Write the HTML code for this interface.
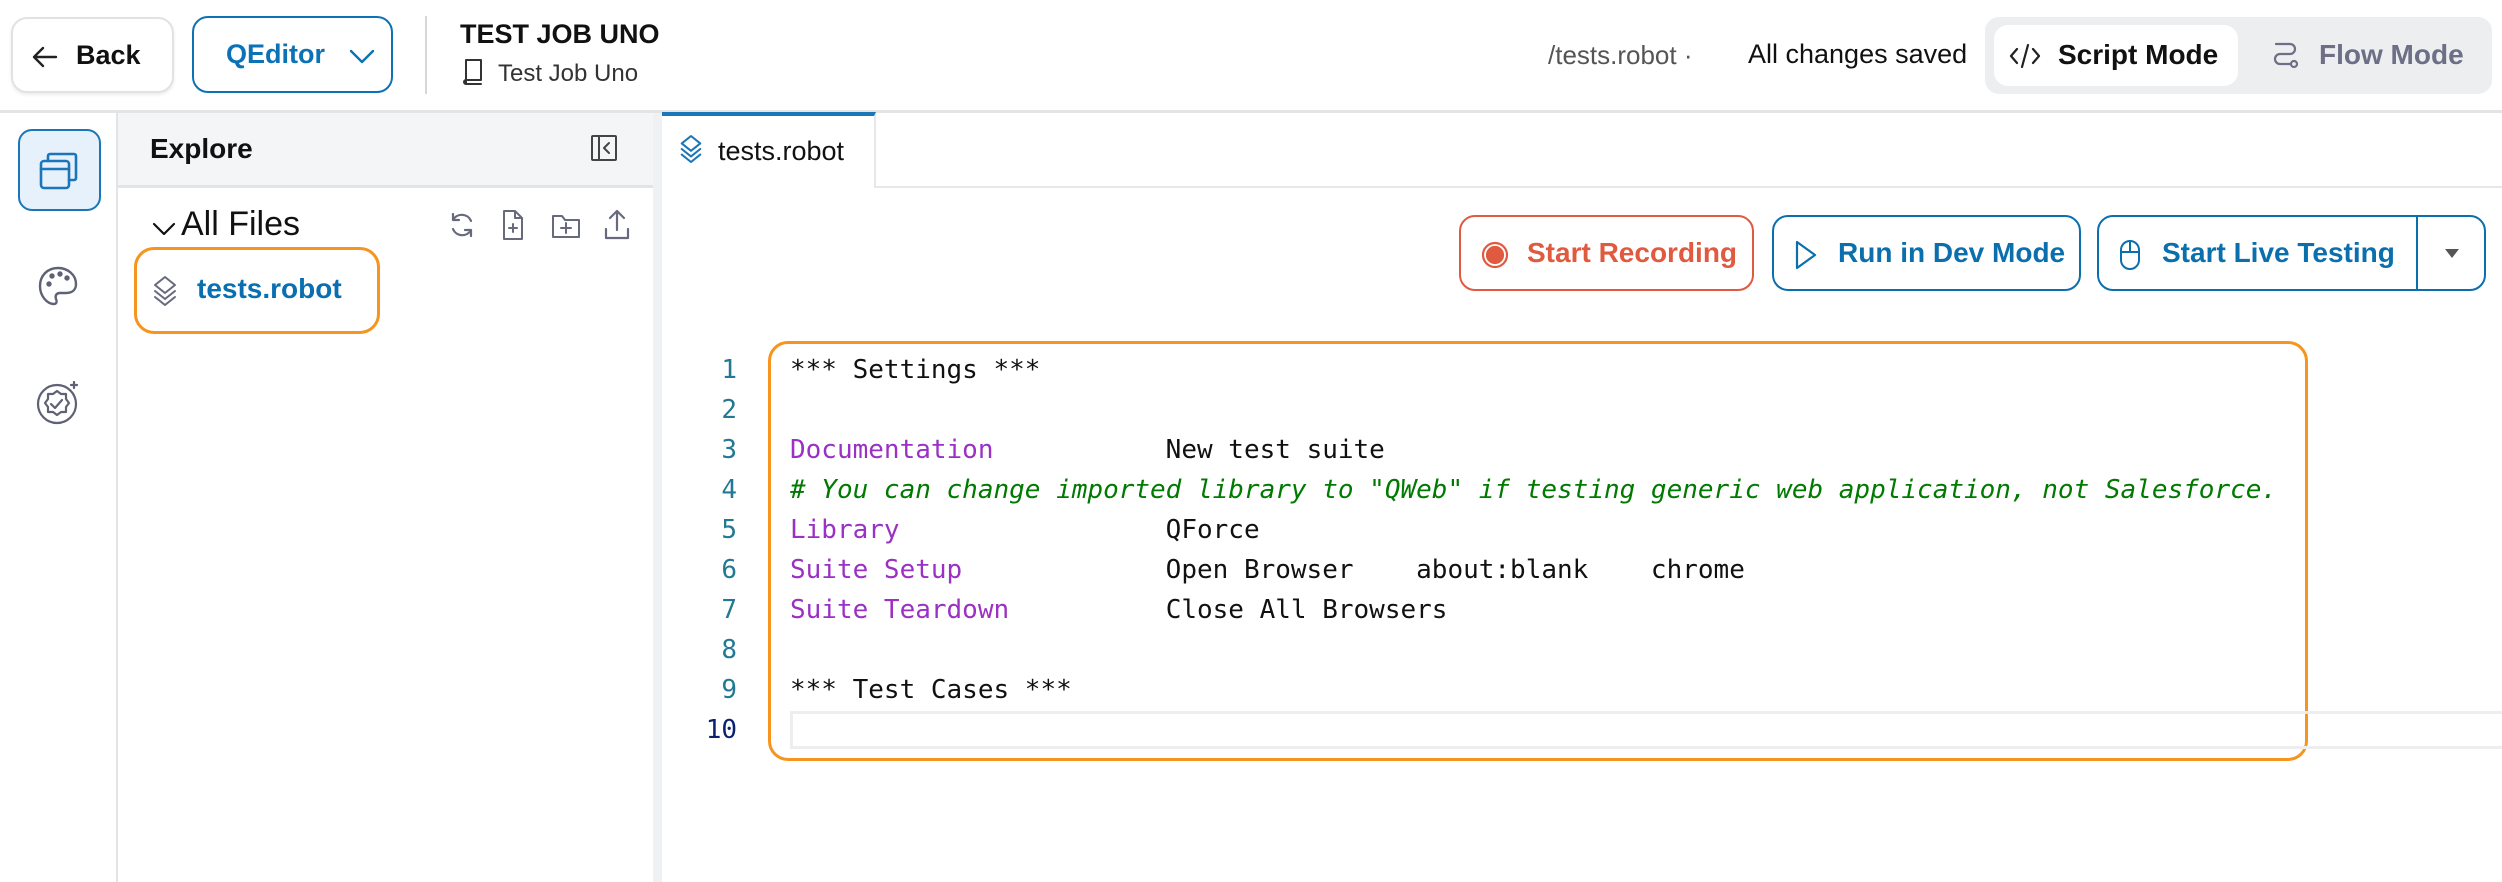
<!DOCTYPE html>
<html><head><meta charset="utf-8"><style>
*{box-sizing:border-box;margin:0;padding:0}
body{width:2502px;height:882px;background:#fff;font-family:"Liberation Sans",sans-serif;position:relative;overflow:hidden;color:#111}
.a{position:absolute}
.btn{position:absolute;border-radius:16px;display:flex;align-items:center;font-weight:bold;font-size:27px}
.code{font-family:"DejaVu Sans Mono",monospace;font-size:26px;white-space:pre;position:absolute;left:790px;line-height:40px}
.ln{position:absolute;left:690px;width:47px;text-align:right;font-family:"DejaVu Sans Mono",monospace;font-size:26px;color:#237893;line-height:40px}
.k{color:#9b30c4}.c{color:#007a00;font-style:italic}
svg{position:absolute;fill:none;stroke-linecap:round;stroke-linejoin:round}
</style></head><body>
<!-- header -->
<div class="a" style="left:0;top:110px;width:2502px;height:3px;background:#e3e4e6"></div>
<div class="btn" style="left:11px;top:17px;width:163px;height:76px;border:2px solid #e2e2e4;box-shadow:0 2px 3px rgba(0,0,0,.08);color:#111">
<svg style="left:18px;top:24px" width="28" height="28" viewBox="0 0 28 28" stroke="#222" stroke-width="2.4"><path d="M25 14H3M12 5l-9 9 9 9"/></svg>
<span style="position:absolute;left:63px">Back</span></div>
<div class="btn" style="left:192px;top:16px;width:201px;height:77px;border:2.5px solid #0b72b5;color:#0b72b5">
<span style="position:absolute;left:32px">QEditor</span>
<svg style="left:155px;top:30px" width="26" height="16" viewBox="0 0 26 16" stroke="#0b72b5" stroke-width="2.4"><path d="M2 3l11 11 11-11"/></svg></div>
<div class="a" style="left:425px;top:16px;width:2px;height:78px;background:#d7d7d9"></div>
<div class="a" style="left:460px;top:19px;font-size:27px;font-weight:600">TEST JOB UNO</div>
<svg style="left:462px;top:58px" width="22" height="28" viewBox="0 0 22 28" stroke="#333" stroke-width="2"><path d="M4 2h15v20H4a2 2 0 0 0 0 4h15M4 2v24"/></svg>
<div class="a" style="left:498px;top:60px;font-size:24px;color:#333">Test Job Uno</div>
<div class="a" style="left:1548px;top:40px;font-size:26px;color:#555">/tests.robot ·</div>
<div class="a" style="left:1748px;top:39px;font-size:27px;color:#111">All changes saved</div>
<div class="a" style="left:1985px;top:17px;width:507px;height:77px;background:#eceef0;border-radius:14px"></div>
<div class="a" style="left:1994px;top:25px;width:244px;height:61px;background:#fff;border-radius:14px"></div>
<svg style="left:2008px;top:41px" width="34" height="30" viewBox="0 0 34 30" stroke="#222" stroke-width="2.2"><path d="M9 8l-6 7 6 7M25 8l6 7-6 7M20 4l-6 22"/></svg>
<div class="a" style="left:2058px;top:39px;font-size:28px;font-weight:bold">Script Mode</div>
<svg style="left:2270px;top:40px" width="32" height="32" viewBox="0 0 32 32" stroke="#6c6f85" stroke-width="2.2"><path d="M6 4h14a5 5 0 0 1 0 10H10a5 5 0 0 0 0 10h10"/><circle cx="24" cy="24" r="3"/></svg>
<div class="a" style="left:2319px;top:39px;font-size:28px;font-weight:bold;color:#6c6f85">Flow Mode</div>
<!-- left rail -->
<div class="a" style="left:116px;top:113px;width:2px;height:769px;background:#e3e4e6"></div>
<div class="a" style="left:18px;top:129px;width:83px;height:82px;background:#e6f1fb;border:2px solid #1a76b8;border-radius:14px"></div>
<svg style="left:38px;top:150px" width="42" height="42" viewBox="0 0 42 42" stroke="#1a76b8" stroke-width="2.6"><rect x="3" y="11" width="28" height="27" rx="3"/><path d="M3 19h28M10 11V6a2 2 0 0 1 2-2h24a2 2 0 0 1 2 2v22a2 2 0 0 1-2 2h-5"/></svg>
<svg style="left:36px;top:264px" width="44" height="44" viewBox="0 0 44 44" stroke="#5f6275" stroke-width="2.4"><path d="M22 4C11 4 4 12 4 22s7 18 14 18c3 0 3-3 2-5-1-3 0-6 4-6h6c7 0 10-4 10-9C40 11 32 4 22 4z"/><circle cx="13" cy="20" r="1.5" fill="#5f6275"/><circle cx="16" cy="12" r="1.5" fill="#5f6275"/><circle cx="24" cy="10" r="1.5" fill="#5f6275"/><circle cx="31" cy="14" r="1.5" fill="#5f6275"/></svg>
<svg style="left:34px;top:378px" width="48" height="48" viewBox="0 0 48 48" stroke="#5f6275" stroke-width="2.2"><circle cx="23" cy="26" r="19"/><path d="M23 13l4 3h5v5l3 4-3 4v5h-5l-4 3-4-3h-5v-5l-3-4 3-4v-5h5z"/><path d="M17 26l4 4 7-8"/><path d="M40 4v6M37 7h6"/></svg>
<!-- explorer -->
<div class="a" style="left:118px;top:113px;width:535px;height:75px;background:#f4f5f7;border-bottom:3px solid #e3e4e6"></div>
<div class="a" style="left:150px;top:133px;font-size:28px;font-weight:bold">Explore</div>
<svg style="left:590px;top:134px" width="28" height="28" viewBox="0 0 28 28" stroke="#444" stroke-width="2"><rect x="2" y="2" width="24" height="24" rx="1"/><path d="M9 2v24M19 9l-5 5 5 5"/></svg>
<div class="a" style="left:653px;top:113px;width:9px;height:769px;background:#f0f1f3"></div>
<svg style="left:152px;top:220px" width="24" height="18" viewBox="0 0 24 18" stroke="#111" stroke-width="2.2"><path d="M2 4l10 10 10-10"/></svg>
<div class="a" style="left:181px;top:205px;font-size:34px">All Files</div>
<svg style="left:447px;top:210px" width="30" height="30" viewBox="0 0 30 30" stroke="#666a7c" stroke-width="2.2"><path d="M24 11A10 10 0 0 0 6 10M6 4v6h6M6 19a10 10 0 0 0 18 1M24 26v-6h-6"/></svg>
<svg style="left:501px;top:209px" width="24" height="32" viewBox="0 0 24 32" stroke="#666a7c" stroke-width="2"><path d="M3 2h11l7 7v21H3zM14 2v7h7M8 19h8M12 15v8"/></svg>
<svg style="left:551px;top:213px" width="30" height="26" viewBox="0 0 30 26" stroke="#666a7c" stroke-width="2"><path d="M2 3h9l3 4h14v17H2zM10 15h10M15 10v10"/></svg>
<svg style="left:603px;top:208px" width="28" height="32" viewBox="0 0 28 32" stroke="#666a7c" stroke-width="2.2"><path d="M14 22V3M7 10l7-7 7 7M3 21v9h22v-9"/></svg>
<div class="a" style="left:134px;top:247px;width:246px;height:87px;border:3px solid #f7941d;border-radius:20px"></div>
<svg style="left:151px;top:274px" width="28" height="34" viewBox="0 0 28 34" stroke="#666a7c" stroke-width="2"><path d="M14 3l10 8-10 8-10-8zM4 17l10 8 10-8M4 23l10 8 10-8"/></svg>
<div class="a" style="left:197px;top:273px;font-size:28px;font-weight:bold;color:#0a6fb0">tests.robot</div>
<!-- tabs -->
<div class="a" style="left:662px;top:186px;width:1840px;height:2px;background:#e6e7e9"></div>
<div class="a" style="left:662px;top:112px;width:214px;height:76px;background:#fff;border-top:4px solid #1a76b8;border-right:2px solid #e6e7e9"></div>
<svg style="left:678px;top:132px" width="26" height="34" viewBox="0 0 28 34" stroke="#1a76b8" stroke-width="2.2"><path d="M14 3l10 8-10 8-10-8zM4 17l10 8 10-8M4 23l10 8 10-8"/></svg>
<div class="a" style="left:718px;top:136px;font-size:27px;color:#111">tests.robot</div>
<!-- action buttons -->
<div class="btn" style="left:1459px;top:215px;width:295px;height:76px;border:2px solid #e05a3f;color:#e05a3f">
<svg style="left:20px;top:24px" width="28" height="28" viewBox="0 0 28 28" stroke="#e05a3f" stroke-width="2.2"><circle cx="14" cy="14" r="12"/><circle cx="14" cy="14" r="8" fill="#e05a3f"/></svg>
<span style="position:absolute;left:66px;font-size:28px">Start Recording</span></div>
<div class="btn" style="left:1772px;top:215px;width:309px;height:76px;border:2px solid #0b6fae;color:#0b6fae">
<svg style="left:20px;top:22px" width="24" height="32" viewBox="0 0 24 32" stroke="#0b6fae" stroke-width="2.2"><path d="M3 3l18 13-18 13z"/></svg>
<span style="position:absolute;left:64px;font-size:28px">Run in Dev Mode</span></div>
<div class="btn" style="left:2097px;top:215px;width:389px;height:76px;border:2px solid #0b6fae;color:#0b6fae">
<svg style="left:20px;top:22px" width="22" height="32" viewBox="0 0 22 32" stroke="#0b6fae" stroke-width="2"><rect x="2" y="2" width="18" height="28" rx="9"/><path d="M2 13h18M11 2v11"/></svg>
<span style="position:absolute;left:63px;font-size:28px">Start Live Testing</span>
<div class="a" style="left:317px;top:0;width:2px;height:72px;background:#0b6fae"></div>
<svg style="left:344px;top:30px" width="18" height="12" viewBox="0 0 18 12"><path d="M2 2h14l-7 9z" fill="#555" stroke="none"/></svg></div>
<!-- editor -->
<div class="a" style="left:768px;top:341px;width:1540px;height:420px;border:3px solid #f7941d;border-radius:20px"></div>
<div class="a" style="left:790px;top:711px;width:1712px;height:38px;border:3px solid #eeeeee;border-right:none"></div>
<div class="ln" style="top:350px">1<br>2<br>3<br>4<br>5<br>6<br>7<br>8<br>9<br><span style="color:#0b216f">10</span></div>
<div class="code" style="top:350px">*** Settings ***

<span class="k">Documentation</span>           New test suite
<span class="c"># You can change imported library to "QWeb" if testing generic web application, not Salesforce.</span>
<span class="k">Library</span>                 QForce
<span class="k">Suite Setup</span>             Open Browser    about:blank    chrome
<span class="k">Suite Teardown</span>          Close All Browsers

*** Test Cases ***
</div>
</body></html>
